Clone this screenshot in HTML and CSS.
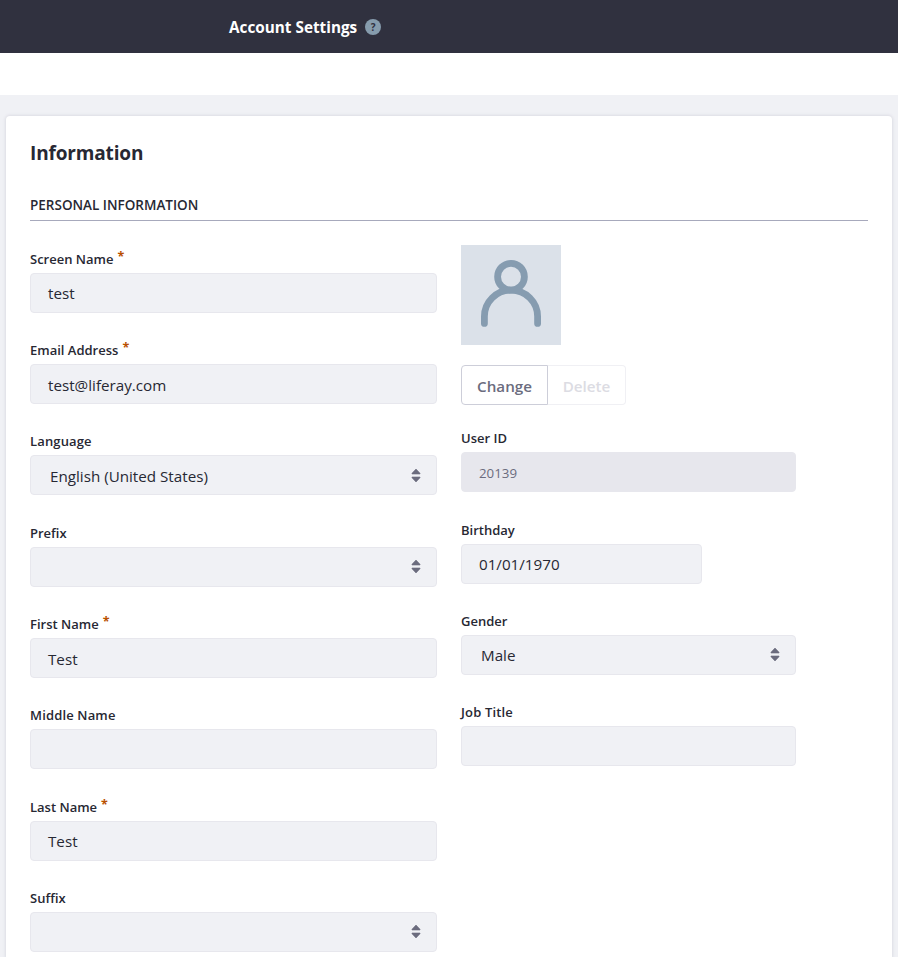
FILE: index.html
```html
<!DOCTYPE html>
<html lang="en">
<head>
<meta charset="utf-8">
<title>Account Settings</title>
<link rel="stylesheet" href="styles.css">
</head>
<body>
<svg class="sprite" width="0" height="0">
  <symbol id="caret-double" viewBox="0 0 10 15">
    <path d="M5 1 9 5.2V6H1V5.2ZM5 14 9 9.8V9H1V9.8Z" stroke="#6b6c7e" stroke-width=".6" stroke-linejoin="round"/>
  </symbol>
</svg>
<header class="topbar">
  <h1 class="topbar-title">Account Settings</h1>
  <span class="help">?</span>
</header>
<div class="navbar"></div>
<main class="sheet">
  <h2 class="sheet-title">Information</h2>
  <h3 class="sheet-subtitle">PERSONAL INFORMATION</h3>
  <div class="columns">
    <div class="column-main">
      <div class="group"><div class="label"><span>Screen Name</span><span class="required">*</span></div><div class="control"><span>test</span></div></div>
      <div class="group"><div class="label"><span>Email Address</span><span class="required">*</span></div><div class="control"><span>test@liferay.com</span></div></div>
      <div class="group"><div class="label wide"><span>Language</span></div><div class="control select"><span>English (United States)</span><svg class="caret"><use href="#caret-double"/></svg></div></div>
      <div class="group"><div class="label"><span>Prefix</span></div><div class="control select"><svg class="caret"><use href="#caret-double"/></svg></div></div>
      <div class="group"><div class="label"><span>First Name</span><span class="required">*</span></div><div class="control"><span>Test</span></div></div>
      <div class="group"><div class="label wide"><span>Middle Name</span></div><div class="control"></div></div>
      <div class="group"><div class="label"><span>Last Name</span><span class="required">*</span></div><div class="control"><span>Test</span></div></div>
      <div class="group"><div class="label"><span>Suffix</span></div><div class="control select"><svg class="caret"><use href="#caret-double"/></svg></div></div>
    </div>
    <div class="column-side">
      <svg class="avatar" viewBox="0 0 100 100">
        <g fill="none" stroke="#869cb0" stroke-width="6.8" stroke-linecap="round">
          <circle cx="50" cy="31.7" r="13.4"/>
          <path d="M23.4 78.4V71.5a26.6 26.4 0 0 1 53.2 0V78.4"/>
        </g>
      </svg>
      <div class="buttons">
        <button class="btn btn-change">Change</button>
        <button class="btn btn-delete" disabled>Delete</button>
      </div>
      <div class="group"><div class="label"><span>User ID</span></div><div class="control readonly"><span>20139</span></div></div>
      <div class="group"><div class="label"><span>Birthday</span></div><div class="control date"><span>01/01/1970</span></div></div>
      <div class="group"><div class="label"><span>Gender</span></div><div class="control select"><span>Male</span><svg class="caret"><use href="#caret-double"/></svg></div></div>
      <div class="group"><div class="label wide"><span>Job Title</span></div><div class="control"></div></div>
    </div>
  </div>
</main>
</body>
</html>
```
FILE: styles.css
```css
* { box-sizing: border-box; }
html { overflow: hidden; }
body {
  display: flex;
  flex-direction: column;
  margin: 0;
  height: 957px;
  overflow: hidden;
  background: #f0f1f5;
  color: #272833;
  font-family: "Open Sans", "Noto Sans", sans-serif;
  font-size: 15.2px;
}
.sprite { position: absolute; }
h1, h2, h3 { margin: 0; }
.topbar {
  display: flex;
  flex: none;
  align-items: center;
  gap: 8px;
  height: 53px;
  padding-left: 229px;
  background: #30313f;
  color: #fff;
}
.topbar-title { font-size: 15.3px; line-height: 20px; font-weight: 700; }
.help {
  width: 16px;
  height: 16px;
  margin-top: 1px;
  border-radius: 50%;
  background: #869cad;
  color: #30313f;
  font-size: 10px;
  font-weight: 700;
  line-height: 16px;
  text-align: center;
}
.navbar { flex: none; height: 42px; background: #fff; }
.sheet {
  flex: 1;
  min-height: 0;
  margin: 21px 6px 0;
  padding: 24px 24px 0;
  border-radius: 4px 4px 0 0;
  background: #fff;
  box-shadow: 0 0 3px 1px #dcdde4;
}
.sheet-title { font-size: 19px; line-height: 26px; font-weight: 700; letter-spacing: -.15px; }
.sheet-subtitle {
  height: 31px;
  margin-top: 24px;
  padding-top: 5px;
  border-bottom: 1px solid #a7a9bc;
  font-size: 13.5px;
  line-height: 20px;
  font-weight: 600;
}
.columns { display: flex; gap: 24px; margin-top: 24px; }
.column-main { width: 407px; padding-top: 2.9px; }
.column-side { width: 335px; }
.group { height: 91.29px; }
.label {
  display: flex;
  height: 25px;
  font-size: 13px;
  line-height: 23.6px;
  font-weight: 600;
}
.wide { letter-spacing: .15px; }
.column-side .label { line-height: 23.4px; }
.required { margin-left: 4px; color: #b95000; font-size: 12.5px; font-weight: 700; line-height: 18px; }
.control {
  display: flex;
  align-items: center;
  height: 40px;
  padding: 1px 15px 0 17px;
  border: 1px solid #e7e7ed;
  border-radius: 4px;
  background: #f0f1f5;
  line-height: 22px;
}
.select { padding-left: 19px; }
.caret { width: 10px; height: 15px; margin: -1px 0 0 auto; fill: #6b6c7e; }
.readonly { background: #e7e7ed; color: #6b6c7e; font-size: 13.3px; }
.date { width: 241px; }
.avatar { display: block; width: 100px; height: 100px; background: #dbe1e9; }
.buttons { display: flex; height: 40px; margin: 20px 0 22.4px; }
.btn {
  height: 40px;
  padding: 1px 0 0;
  border: 1px solid #cdced9;
  background: #fff;
  color: #6b6c7e;
  font: 600 15.2px "Open Sans", sans-serif;
}
.btn-change { width: 87px; border-radius: 4px 0 0 4px; }
.btn-delete { width: 78px; border-color: #f0f0f4; border-left: 0; border-radius: 0 4px 4px 0; color: #dcdce3; }
```
